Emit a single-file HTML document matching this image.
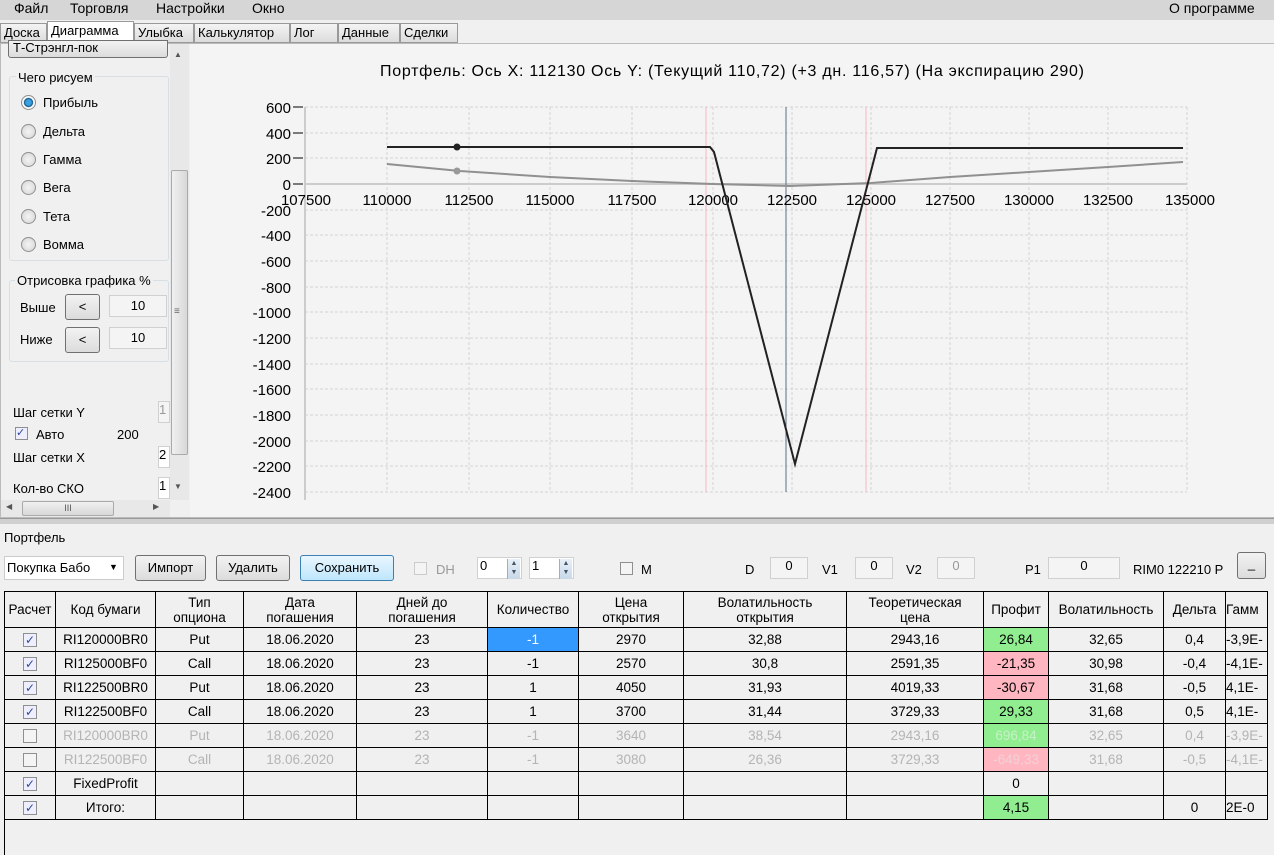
<!DOCTYPE html>
<html><head><meta charset="utf-8"><style>
*{box-sizing:border-box}
body{margin:0;width:1274px;height:855px;overflow:hidden;background:#f0f0f0;font-family:"Liberation Sans",sans-serif;font-size:13px;color:#000;position:relative}
.a{position:absolute}
.menu{left:0;top:0;width:1274px;height:20px;background:#d6d6d6}
.menu span{position:absolute;top:0;font-size:14px}
.tab{position:absolute;top:23px;height:20px;border:1px solid #999;background:linear-gradient(#f4f4f4,#dcdcdc);font-size:13px;padding:1px 3px}
.btn{position:absolute;border:1px solid #707070;border-radius:3px;background:linear-gradient(#f2f2f2,#dcdcdc);text-align:center;font-size:13px}
.radio{position:absolute;left:21px;width:15px;height:15px;border-radius:50%;border:1px solid #8e8f8f;background:radial-gradient(#f4f4f4,#d4d4d4)}
.lbl{position:absolute;font-size:13px}
.inp{position:absolute;background:#f4f4f4;border:1px solid #d0d0d0;text-align:center;font-size:13px}
.cb{position:absolute;width:13px;height:13px;border:1px solid #8e8f8f;background:#f4f4f4}
.spin{position:absolute;width:13px;height:20px;top:1px;right:1px;background:linear-gradient(#e8f0f8,#c8d8e8);border-left:1px solid #aab;font-size:7px;line-height:9px;text-align:center;color:#456}
table{position:absolute;left:4px;top:591px;border-collapse:collapse;table-layout:fixed;font-size:13.5px}
td{border:1px solid #000;text-align:center;height:24px;padding:0;white-space:nowrap;overflow:hidden}
tr.h td{height:36px;background:#f0f0f0;line-height:15px}
tr.g td{color:#b4b4b4}
.ck{display:inline-block;width:14px;height:14px;border:1px solid #8e8f8f;background:#eef;vertical-align:middle;font-size:12px;line-height:12px;color:#2a4b9a}
.gr{background:#90ee90}.pk{background:#ffb6c1}
</style></head><body>
<div class="a menu"><span style="left:14px">Файл</span><span style="left:70px">Торговля</span><span style="left:156px">Настройки</span><span style="left:252px">Окно</span><span style="left:1169px">О программе</span></div>
<div class="tab" style="left:0;width:47px">Доска</div>
<div class="tab" style="left:47px;top:21px;height:23px;width:87px;background:#fff;border-bottom:none">Диаграмма</div>
<div class="tab" style="left:134px;width:60px">Улыбка</div>
<div class="tab" style="left:194px;width:96px">Калькулятор</div>
<div class="tab" style="left:290px;width:48px">Лог</div>
<div class="tab" style="left:338px;width:62px">Данные</div>
<div class="tab" style="left:400px;width:58px">Сделки</div>
<div class="a" style="left:0;top:43px;width:1274px;height:475px;background:#fff;border:1px solid #bbb"></div>
<div class="a" style="left:1px;top:44px;width:189px;height:473px;background:#f0f0f0"></div>
<div class="btn" style="left:8px;top:40px;width:160px;height:18px;text-align:left;padding-left:4px;line-height:14px;border-radius:0 0 3px 3px">Т-Стрэнгл-пок</div>
<div class="a" style="left:9px;top:76px;width:160px;height:185px;border:1px solid #d5dfe5;border-radius:3px"></div>
<div class="lbl" style="left:16px;top:70px;background:#f0f0f0;padding:0 2px">Чего рисуем</div>
<div class="radio" style="top:95px;background:radial-gradient(#3aa0e0 30%,#0a4e80 45%,#fff 55%,#ddd)"></div><div class="lbl" style="left:43px;top:95px">Прибыль</div>
<div class="radio" style="top:124px"></div><div class="lbl" style="left:43px;top:124px">Дельта</div>
<div class="radio" style="top:152px"></div><div class="lbl" style="left:43px;top:152px">Гамма</div>
<div class="radio" style="top:180px"></div><div class="lbl" style="left:43px;top:180px">Вега</div>
<div class="radio" style="top:209px"></div><div class="lbl" style="left:43px;top:209px">Тета</div>
<div class="radio" style="top:237px"></div><div class="lbl" style="left:43px;top:237px">Вомма</div>
<div class="a" style="left:9px;top:280px;width:160px;height:82px;border:1px solid #d5dfe5;border-radius:3px"></div>
<div class="lbl" style="left:15px;top:273px;background:#f0f0f0;padding:0 2px">Отрисовка графика %</div>
<div class="lbl" style="left:20px;top:300px">Выше</div><div class="btn" style="left:65px;top:294px;width:35px;height:26px;line-height:24px">&lt;</div><div class="inp" style="left:109px;top:295px;width:58px;height:22px;line-height:20px">10</div>
<div class="lbl" style="left:20px;top:332px">Ниже</div><div class="btn" style="left:65px;top:327px;width:35px;height:26px;line-height:24px">&lt;</div><div class="inp" style="left:109px;top:327px;width:58px;height:22px;line-height:20px">10</div>
<div class="lbl" style="left:13px;top:405px">Шаг сетки Y</div><div class="inp" style="left:158px;top:401px;width:12px;height:22px;color:#999;text-align:left">1</div>
<div class="cb" style="left:15px;top:427px;background:#eef;font-size:11px;line-height:10px;color:#2a4b9a">✓</div><div class="lbl" style="left:36px;top:427px">Авто</div><div class="lbl" style="left:117px;top:427px">200</div>
<div class="lbl" style="left:13px;top:450px">Шаг сетки X</div><div class="inp" style="left:158px;top:446px;width:12px;height:22px;text-align:left;background:#fff">2</div>
<div class="lbl" style="left:13px;top:481px">Кол-во СКО</div><div class="inp" style="left:158px;top:477px;width:12px;height:22px;text-align:left;background:#fff">1</div>
<div class="a" style="left:170px;top:44px;width:19px;height:456px;background:#e8e8e8"></div>
<div class="a" style="left:171px;top:170px;width:17px;height:285px;background:linear-gradient(90deg,#f0f0f0,#d8d8d8);border:1px solid #aaa;border-radius:2px"></div>
<div class="lbl" style="left:174px;top:50px;font-size:8px;color:#555">▲</div>
<div class="lbl" style="left:174px;top:306px;font-size:10px;color:#666">≡</div>
<div class="lbl" style="left:174px;top:482px;font-size:8px;color:#555">▼</div>
<div class="a" style="left:1px;top:500px;width:169px;height:17px;background:#e8e8e8"></div>
<div class="a" style="left:22px;top:501px;width:92px;height:15px;background:linear-gradient(#f0f0f0,#d8d8d8);border:1px solid #aaa;border-radius:2px;text-align:center;font-size:9px;line-height:12px;color:#555">III</div>
<div class="lbl" style="left:6px;top:502px;font-size:8px;color:#555">◀</div><div class="lbl" style="left:153px;top:502px;font-size:8px;color:#555">▶</div>
<svg class="a" style="left:190px;top:44px" width="1084" height="473" viewBox="190 44 1084 473">
<rect x="190" y="44" width="1084" height="473" fill="#f4f4f4"/>
<text x="380" y="76" font-family="Liberation Sans" font-size="16" textLength="704" lengthAdjust="spacing">Портфель: Ось X: 112130 Ось Y:  (Текущий 110,72)  (+3 дн. 116,57)  (На экспирацию 290)</text>
<g stroke="#d4d4d4" stroke-dasharray="3,2" stroke-width="1">
<line x1="305" y1="107" x2="1187" y2="107"/><line x1="305" y1="133" x2="1187" y2="133"/><line x1="305" y1="158" x2="1187" y2="158"/>
<line x1="305" y1="210" x2="1187" y2="210"/><line x1="305" y1="235" x2="1187" y2="235"/><line x1="305" y1="261" x2="1187" y2="261"/><line x1="305" y1="287" x2="1187" y2="287"/><line x1="305" y1="312" x2="1187" y2="312"/><line x1="305" y1="338" x2="1187" y2="338"/><line x1="305" y1="364" x2="1187" y2="364"/><line x1="305" y1="389" x2="1187" y2="389"/><line x1="305" y1="415" x2="1187" y2="415"/><line x1="305" y1="441" x2="1187" y2="441"/><line x1="305" y1="466" x2="1187" y2="466"/><line x1="305" y1="492" x2="1187" y2="492"/>
<line x1="387" y1="107" x2="387" y2="492"/><line x1="469" y1="107" x2="469" y2="492"/><line x1="550" y1="107" x2="550" y2="492"/><line x1="632" y1="107" x2="632" y2="492"/><line x1="713" y1="107" x2="713" y2="492"/><line x1="792" y1="107" x2="792" y2="492"/><line x1="871" y1="107" x2="871" y2="492"/><line x1="950" y1="107" x2="950" y2="492"/><line x1="1029" y1="107" x2="1029" y2="492"/><line x1="1108" y1="107" x2="1108" y2="492"/><line x1="1187" y1="107" x2="1187" y2="492"/>
</g>
<line x1="305" y1="107" x2="305" y2="500" stroke="#ccc" stroke-width="2"/>
<line x1="305" y1="184" x2="1187" y2="184" stroke="#ccc" stroke-width="2"/>
<line x1="706" y1="107" x2="706" y2="492" stroke="#f7b8c0"/><line x1="866" y1="107" x2="866" y2="492" stroke="#f7b8c0"/>
<line x1="786" y1="107" x2="786" y2="492" stroke="#5a6f8a"/>
<g font-family="Liberation Sans" font-size="15" text-anchor="end">
<text x="291" y="113">600</text><text x="291" y="139">400</text><text x="291" y="164">200</text><text x="291" y="190">0</text><text x="291" y="216">-200</text><text x="291" y="241">-400</text><text x="291" y="267">-600</text><text x="291" y="293">-800</text><text x="291" y="318">-1000</text><text x="291" y="344">-1200</text><text x="291" y="370">-1400</text><text x="291" y="395">-1600</text><text x="291" y="421">-1800</text><text x="291" y="447">-2000</text><text x="291" y="472">-2200</text><text x="291" y="498">-2400</text></g>
<g stroke="#000"><line x1="293" y1="107" x2="303" y2="107"/><line x1="293" y1="133" x2="303" y2="133"/><line x1="293" y1="158" x2="303" y2="158"/><line x1="293" y1="184" x2="303" y2="184"/></g>
<g font-family="Liberation Sans" font-size="15" text-anchor="middle">
<text x="306" y="205">107500</text><text x="387" y="205">110000</text><text x="469" y="205">112500</text><text x="550" y="205">115000</text><text x="632" y="205">117500</text><text x="713" y="205">120000</text><text x="792" y="205">122500</text><text x="871" y="205">125000</text><text x="950" y="205">127500</text><text x="1029" y="205">130000</text><text x="1108" y="205">132500</text><text x="1190" y="205">135000</text></g>
<polyline points="387,164 460,171 550,177 632,181 713,184 790,186 871,183 950,177 1029,172 1108,167 1183,162" fill="none" stroke="#909090" stroke-width="2"/>
<polyline points="387,147 710,147 714,152 795,464 877,148 1183,148" fill="none" stroke="#222" stroke-width="2"/>
<circle cx="457" cy="147" r="3.5" fill="#222"/><circle cx="457" cy="171" r="3.5" fill="#999"/>
</svg>
<div class="a" style="left:0;top:518px;width:1274px;height:6px;background:#d0d0d0;border-top:1px solid #999"></div>
<div class="lbl" style="left:4px;top:530px">Портфель</div>
<div class="a" style="left:4px;top:556px;width:120px;height:24px;background:#fff;border:1px solid #ccc;font-size:13px;padding:3px 2px;overflow:hidden;white-space:nowrap">Покупка Бабо<span style="position:absolute;left:104px;font-size:9px;top:5px">▼</span></div>
<div class="btn" style="left:135px;top:555px;width:71px;height:26px;line-height:24px">Импорт</div>
<div class="btn" style="left:216px;top:555px;width:74px;height:26px;line-height:24px">Удалить</div>
<div class="btn" style="left:300px;top:555px;width:94px;height:26px;line-height:24px;border-color:#3c7fb1;background:linear-gradient(#eaf6fd,#bee6fd)">Сохранить</div>
<div class="cb" style="left:414px;top:562px;border-color:#ccc"></div><div class="lbl" style="left:436px;top:562px;color:#999">DH</div>
<div class="inp" style="left:477px;top:557px;width:45px;height:22px;background:#fff;text-align:left;padding-left:2px">0<div class="spin">▲<br>▼</div></div>
<div class="inp" style="left:529px;top:557px;width:45px;height:22px;background:#fff;text-align:left;padding-left:2px">1<div class="spin">▲<br>▼</div></div>
<div class="cb" style="left:620px;top:562px"></div><div class="lbl" style="left:641px;top:562px">M</div>
<div class="lbl" style="left:745px;top:562px">D</div><div class="inp" style="left:770px;top:557px;width:38px;height:22px">0</div>
<div class="lbl" style="left:822px;top:562px">V1</div><div class="inp" style="left:855px;top:557px;width:38px;height:22px">0</div>
<div class="lbl" style="left:906px;top:562px">V2</div><div class="inp" style="left:937px;top:557px;width:38px;height:22px;color:#999">0</div>
<div class="lbl" style="left:1025px;top:562px">P1</div><div class="inp" style="left:1048px;top:557px;width:72px;height:22px">0</div>
<div class="lbl" style="left:1133px;top:562px">RIM0 122210  P</div>
<div class="btn" style="left:1237px;top:552px;width:29px;height:27px;line-height:22px">_</div>
<table>
<colgroup><col style="width:51px"><col style="width:100px"><col style="width:88px"><col style="width:113px"><col style="width:131px"><col style="width:91px"><col style="width:105px"><col style="width:163px"><col style="width:137px"><col style="width:65px"><col style="width:115px"><col style="width:62px"><col style="width:42px"></colgroup>
<tr class="h"><td>Расчет</td><td>Код бумаги</td><td>Тип<br>опциона</td><td>Дата<br>погашения</td><td>Дней до<br>погашения</td><td>Количество</td><td>Цена<br>открытия</td><td>Волатильность<br>открытия</td><td>Теоретическая<br>цена</td><td>Профит</td><td>Волатильность</td><td>Дельта</td><td style="text-align:left">Гамм</td></tr>
<tr><td><span class="ck">✓</span></td><td>RI120000BR0</td><td>Put</td><td>18.06.2020</td><td>23</td><td style="background:#3399ff;color:#fff">-1</td><td>2970</td><td>32,88</td><td>2943,16</td><td class="gr">26,84</td><td>32,65</td><td>0,4</td><td style="text-align:left">-3,9E-</td></tr>
<tr><td><span class="ck">✓</span></td><td>RI125000BF0</td><td>Call</td><td>18.06.2020</td><td>23</td><td>-1</td><td>2570</td><td>30,8</td><td>2591,35</td><td class="pk">-21,35</td><td>30,98</td><td>-0,4</td><td style="text-align:left">-4,1E-</td></tr>
<tr><td><span class="ck">✓</span></td><td>RI122500BR0</td><td>Put</td><td>18.06.2020</td><td>23</td><td>1</td><td>4050</td><td>31,93</td><td>4019,33</td><td class="pk">-30,67</td><td>31,68</td><td>-0,5</td><td style="text-align:left">4,1E-</td></tr>
<tr><td><span class="ck">✓</span></td><td>RI122500BF0</td><td>Call</td><td>18.06.2020</td><td>23</td><td>1</td><td>3700</td><td>31,44</td><td>3729,33</td><td class="gr">29,33</td><td>31,68</td><td>0,5</td><td style="text-align:left">4,1E-</td></tr>
<tr class="g"><td><span class="ck" style="background:#f4f4f4"></span></td><td>RI120000BR0</td><td>Put</td><td>18.06.2020</td><td>23</td><td>-1</td><td>3640</td><td>38,54</td><td>2943,16</td><td class="gr" style="color:#c8f0c8">696,84</td><td>32,65</td><td>0,4</td><td style="text-align:left">-3,9E-</td></tr>
<tr class="g"><td><span class="ck" style="background:#f4f4f4"></span></td><td>RI122500BF0</td><td>Call</td><td>18.06.2020</td><td>23</td><td>-1</td><td>3080</td><td>26,36</td><td>3729,33</td><td class="pk" style="color:#f4d0d6">-649,33</td><td>31,68</td><td>-0,5</td><td style="text-align:left">-4,1E-</td></tr>
<tr><td><span class="ck">✓</span></td><td>FixedProfit</td><td></td><td></td><td></td><td></td><td></td><td></td><td></td><td>0</td><td></td><td></td><td></td></tr>
<tr><td><span class="ck">✓</span></td><td>Итого:</td><td></td><td></td><td></td><td></td><td></td><td></td><td></td><td class="gr">4,15</td><td></td><td>0</td><td style="text-align:left">2E-0</td></tr>
</table>
<div class="a" style="left:4px;top:591px;width:1px;height:264px;background:#000"></div>
</body></html>
